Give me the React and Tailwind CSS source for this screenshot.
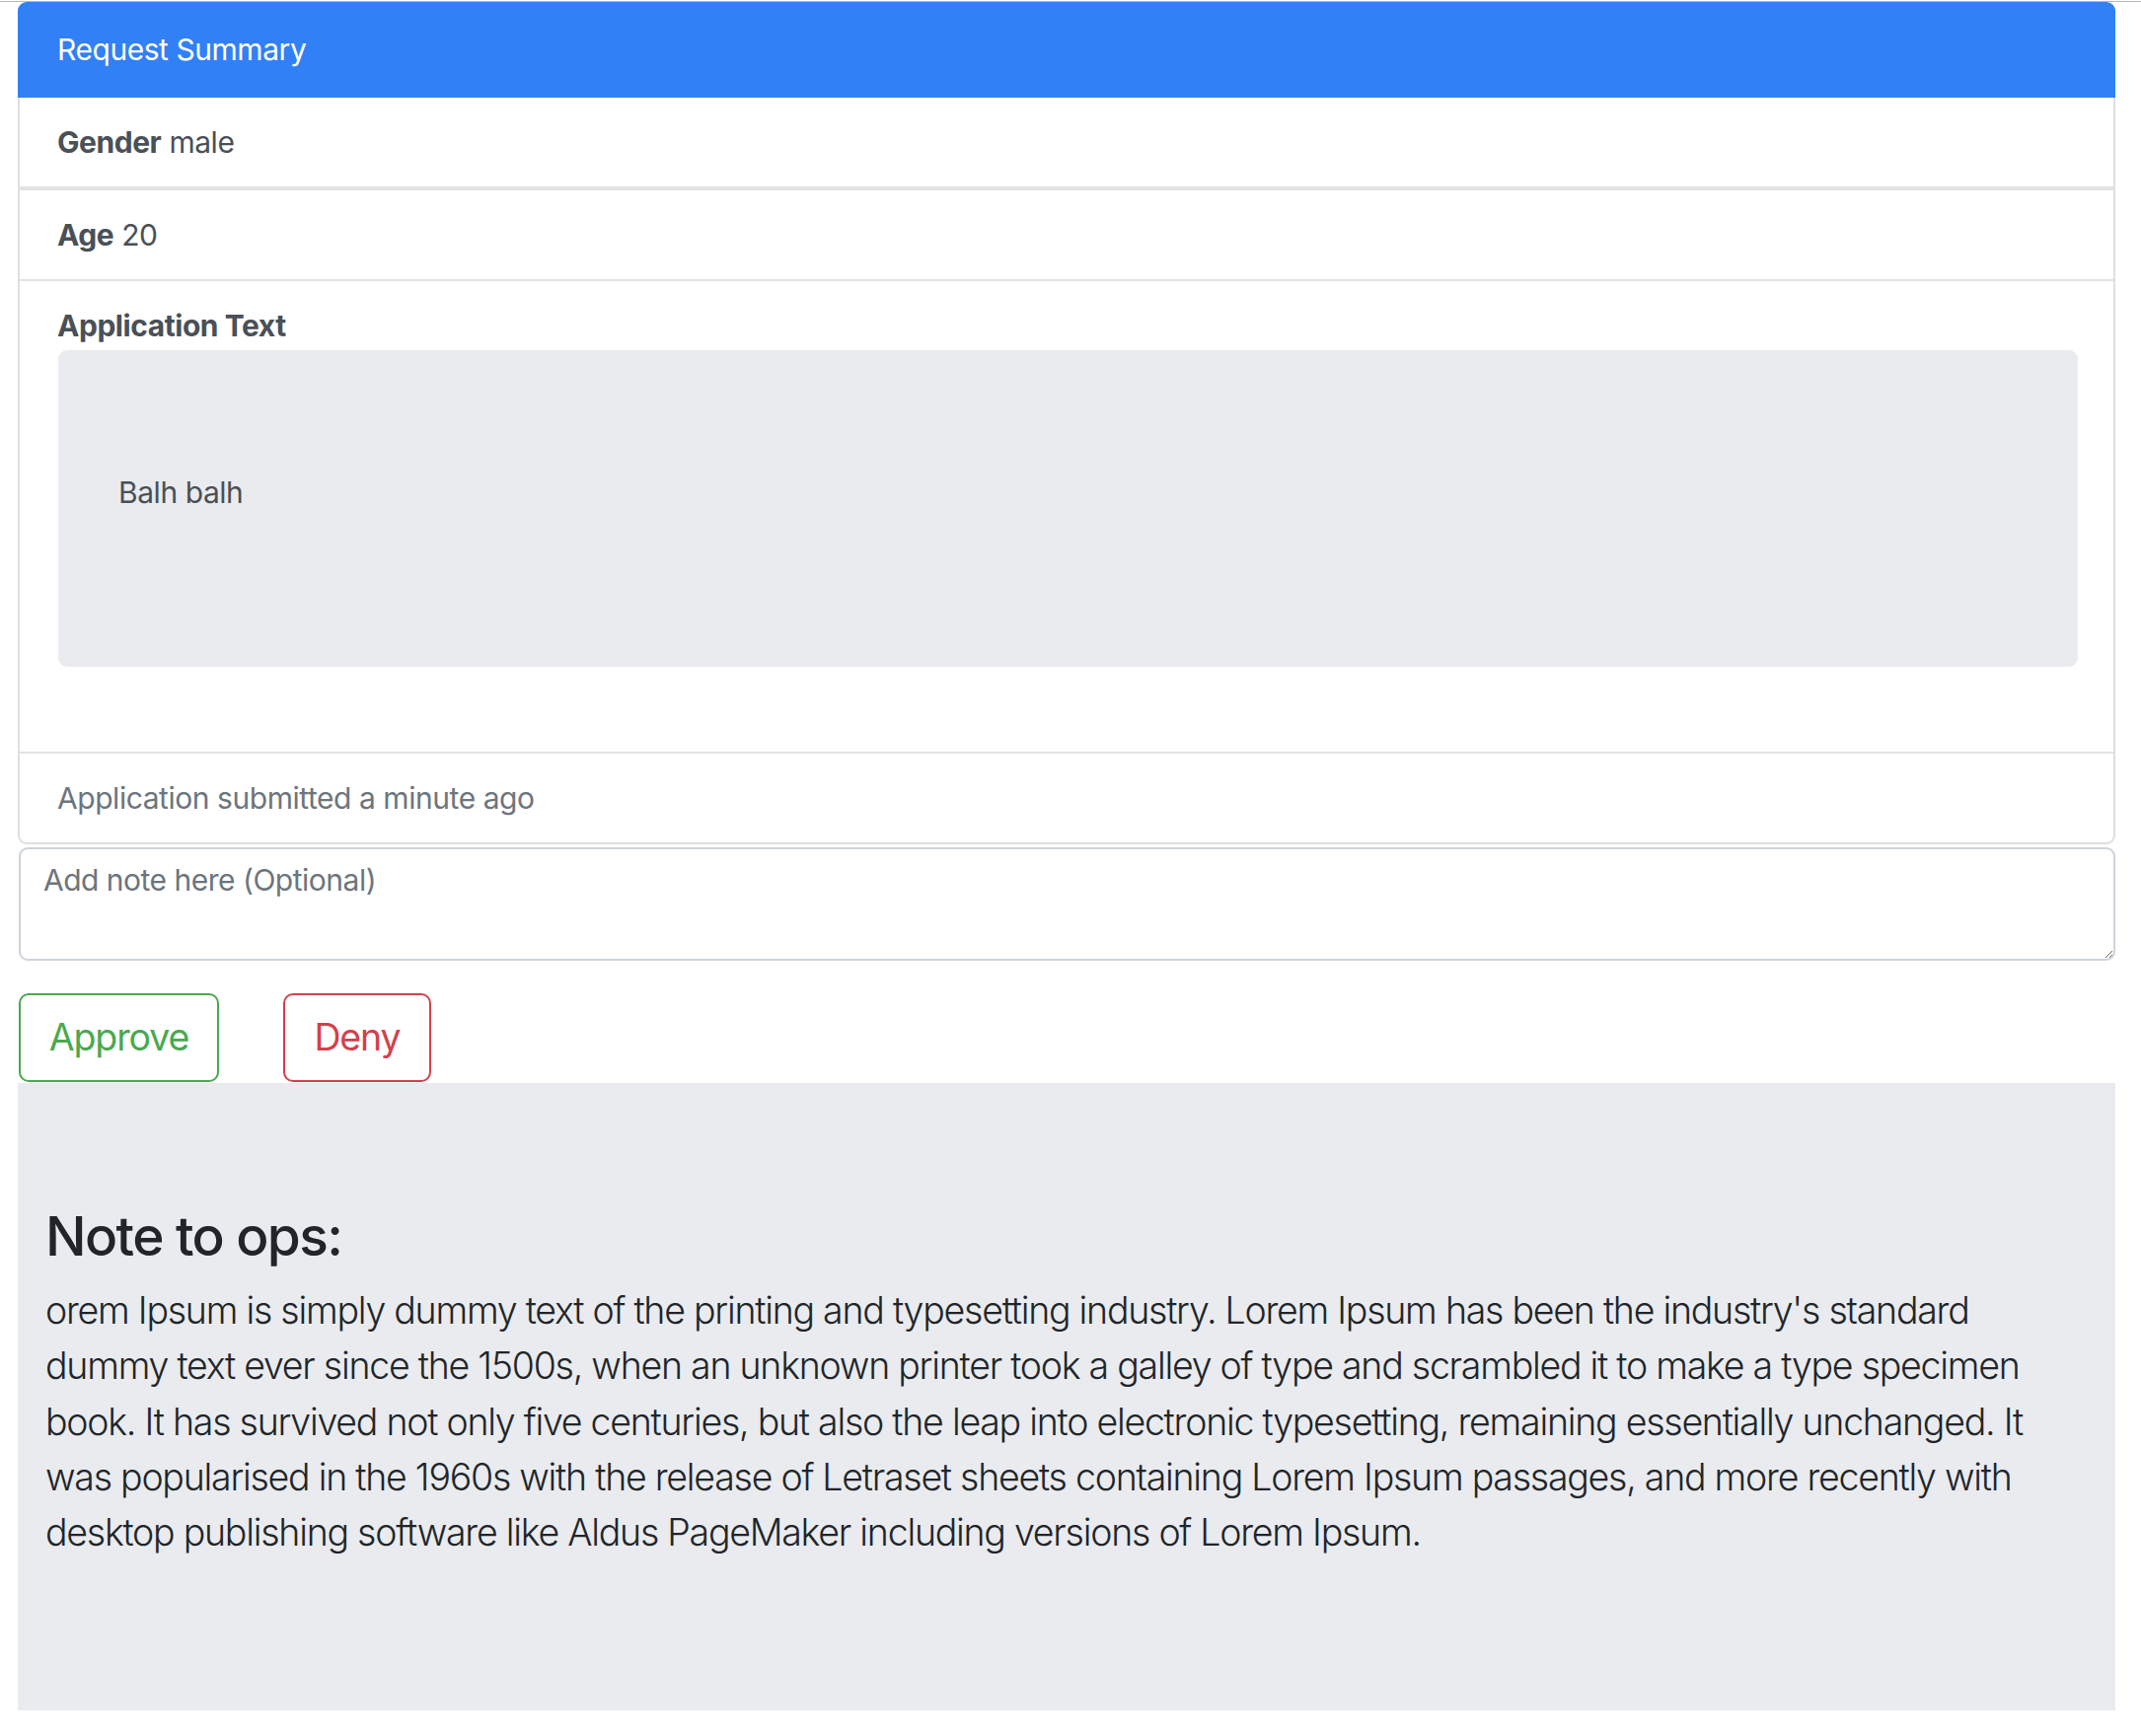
import React from 'react';

const lorem =
  "orem Ipsum is simply dummy text of the printing and typesetting industry. Lorem Ipsum has been the industry's standard dummy text ever since the 1500s, when an unknown printer took a galley of type and scrambled it to make a type specimen book. It has survived not only five centuries, but also the leap into electronic typesetting, remaining essentially unchanged. It was popularised in the 1960s with the release of Letraset sheets containing Lorem Ipsum passages, and more recently with desktop publishing software like Aldus PageMaker including versions of Lorem Ipsum.";

const Row = ({ label, value }) => (
  <div className="h-[90px] flex items-center pl-[38px] text-[30px] leading-[45px] tracking-[-0.45px] text-[#495057]">
    <span className="font-bold">{label}</span>
    <span>&nbsp;{value}</span>
  </div>
);

const App = () => {
  return (
    <div className="min-h-[1760px] bg-white font-['Inter',sans-serif]">
      <div className="h-px mt-px bg-[#b8b8b8]" />

      <div className="ml-[18px] w-[2126px]">
        {/* request summary card */}
        <div className="h-[97px] flex items-center pl-[40px] bg-[#3180f6] rounded-t-[9px] text-white text-[30px] leading-[45px] tracking-[-0.45px]">
          Request Summary
        </div>
        <div className="border-2 border-t-0 border-[#dfdfdf] rounded-b-[9px]">
          <div className="border-b-4 border-[#e2e2e2]">
            <Row label="Gender" value="male" />
          </div>
          <div className="border-b-2 border-[#e2e2e2]">
            <Row label="Age" value="20" />
          </div>
          <div className="border-b-2 border-[#e2e2e2] pt-[23px] pb-[86px] pl-[39px] pr-[36px]">
            <p className="font-bold text-[30px] leading-[45px] tracking-[-0.45px] text-[#495057] mb-[2px] -ml-px">Application Text</p>
            <div className="h-[321px] rounded-[9px] bg-[#e9ebef] pt-[122px] pl-[61px] text-[30px] leading-[45px] tracking-[-0.45px] text-[#495057]">
              Balh balh
            </div>
          </div>
          <div className="h-[90px] flex items-center pl-[38px] text-[30px] leading-[45px] tracking-[-0.45px] text-[#6c757d]">
            Application submitted a minute ago
          </div>
        </div>

        <textarea
          placeholder="Add note here (Optional)"
          className="block mt-[3px] ml-px w-[2125px] h-[115px] border-2 border-[#ced4da] rounded-[9px] pt-[9px] pl-[23px] text-[30px] leading-[45px] tracking-[-0.5px] text-[#495057] placeholder:text-[#6c757d] outline-none"
        />

        <div className="flex gap-[65px] mt-[33px] ml-px">
          <button className="h-[90px] w-[203px] border-2 border-[#4aa850] rounded-[10px] text-[#4aa850] text-[37.5px] leading-[56px] tracking-[-1.1px]">
            Approve
          </button>
          <button className="h-[90px] w-[150px] border-2 border-[#d4404b] rounded-[10px] text-[#d4404b] text-[37.5px] leading-[56px] tracking-[-1.1px]">
            Deny
          </button>
        </div>

        {/* note to ops */}
        <div className="mt-px h-[636px] bg-[#e9ebef] pt-[122px] pl-[28px] pr-[30px] text-[#212529]">
          <h2 className="text-[55px] leading-[66px] font-medium tracking-[-1.6px] mb-[15px]">Note to ops:</h2>
          <p className="text-[37.5px] leading-[56.25px] font-light tracking-[-1.25px]">{lorem}</p>
        </div>
      </div>
    </div>
  );
};

export default App;
